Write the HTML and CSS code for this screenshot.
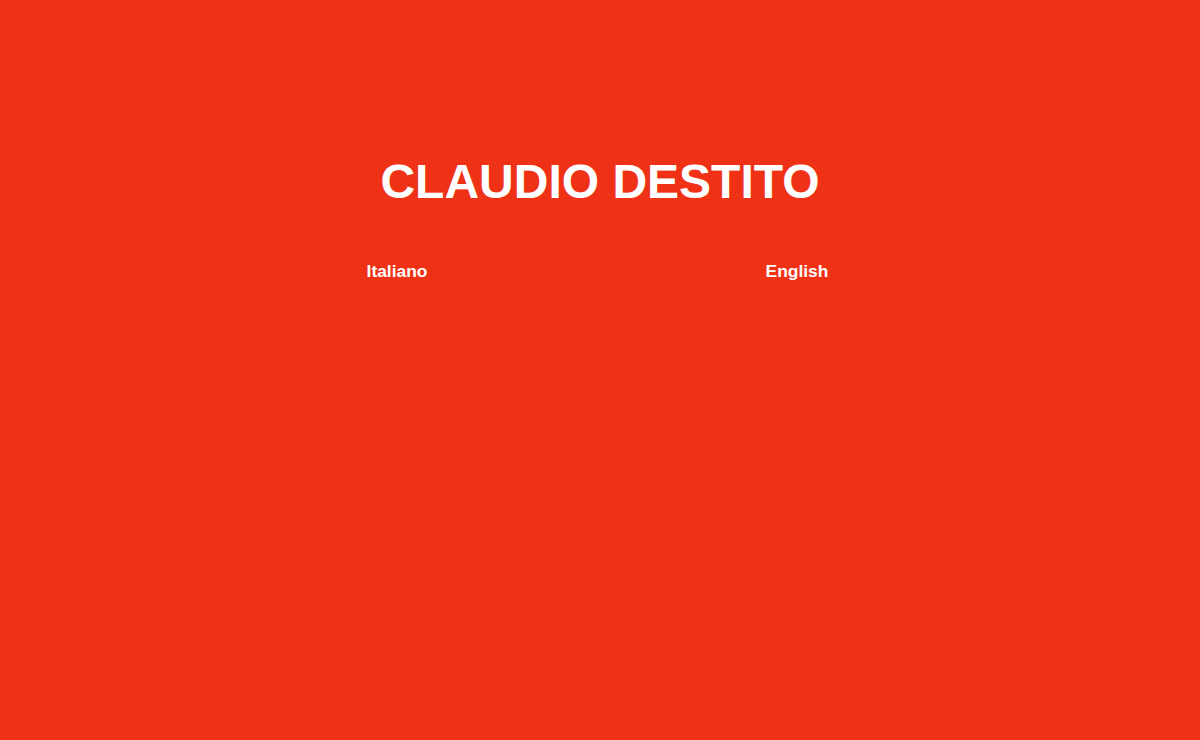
FILE: index.html
```html
<!DOCTYPE html>
<html>
<head>
<meta charset="utf-8">
<title>Claudio Destito</title>
<link rel="stylesheet" href="styles.css">
</head>
<body>
<div class="page">
  <h1 class="title">CLAUDIO DESTITO</h1>
  <nav class="langs">
    <a class="lang" href="#it">Italiano</a>
    <a class="lang" href="#en">English</a>
  </nav>
</div>
</body>
</html>
```
FILE: styles.css
```css
html, body {
  margin: 0;
  padding: 0;
  background: #ef3215;
  height: 100%;
}
body {
  font-family: "Liberation Sans", Arial, sans-serif;
  color: #ffffff;
}
.page {
  padding-top: 152px;
}
.title {
  margin: 0;
  font-size: 48px;
  font-weight: bold;
  line-height: 60px;
  text-align: center;
}
.langs {
  display: grid;
  grid-template-columns: 400px 400px;
  width: 800px;
  margin: 47px auto 0;
  padding-right: 6px;
}
.lang {
  text-align: center;
  color: #ffffff;
  text-decoration: none;
  font-size: 17.4px;
  font-weight: bold;
  line-height: 24px;
}
```
